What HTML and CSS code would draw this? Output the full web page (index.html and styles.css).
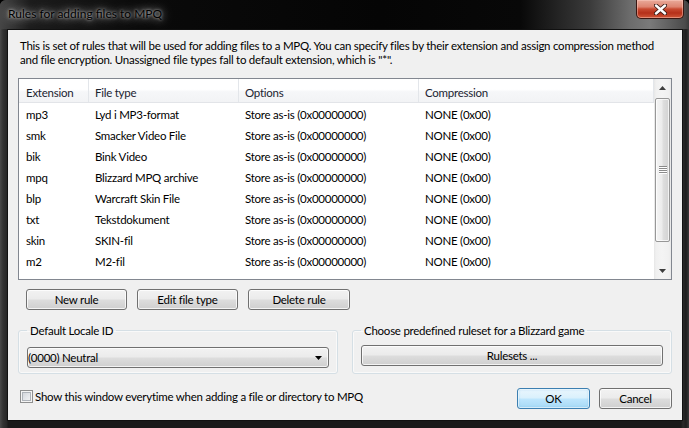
FILE: index.html
```html
<!DOCTYPE html>
<html>
<head>
<meta charset="utf-8">
<title>Rules for adding files to MPQ</title>
<link rel="stylesheet" href="styles.css">
</head>
<body>
<div class="window">
  <div class="titlebar">
    <span class="title">Rules for adding files to MPQ</span>
    <div class="close">
      <svg width="13" height="11" viewBox="0 0 13 11">
        <path d="M2 1.5 L11 9.5 M11 1.5 L2 9.5" stroke="#3b1a14" stroke-width="4.2" stroke-linecap="round"/>
        <path d="M2 1.5 L11 9.5 M11 1.5 L2 9.5" stroke="#fff" stroke-width="2.4" stroke-linecap="round"/>
      </svg>
    </div>
  </div>
  <div class="client">
    <p class="desc">This is set of rules that will be used for adding files to a MPQ. You can specify files by their extension and assign compression method<br>and file encryption. Unassigned file types fall to default extension, which is "*".</p>

    <div class="list">
      <div class="list-body">
        <div class="row header">
          <span class="c1">Extension</span><span class="c2">File type</span><span class="c3">Options</span><span class="c4">Compression</span>
        </div>
        <div class="row"><span class="c1">mp3</span><span class="c2">Lyd i MP3-format</span><span class="c3">Store as-is (0x00000000)</span><span class="c4">NONE (0x00)</span></div>
        <div class="row"><span class="c1">smk</span><span class="c2">Smacker Video File</span><span class="c3">Store as-is (0x00000000)</span><span class="c4">NONE (0x00)</span></div>
        <div class="row"><span class="c1">bik</span><span class="c2">Bink Video</span><span class="c3">Store as-is (0x00000000)</span><span class="c4">NONE (0x00)</span></div>
        <div class="row"><span class="c1">mpq</span><span class="c2">Blizzard MPQ archive</span><span class="c3">Store as-is (0x00000000)</span><span class="c4">NONE (0x00)</span></div>
        <div class="row"><span class="c1">blp</span><span class="c2">Warcraft Skin File</span><span class="c3">Store as-is (0x00000000)</span><span class="c4">NONE (0x00)</span></div>
        <div class="row"><span class="c1">txt</span><span class="c2">Tekstdokument</span><span class="c3">Store as-is (0x00000000)</span><span class="c4">NONE (0x00)</span></div>
        <div class="row"><span class="c1">skin</span><span class="c2">SKIN-fil</span><span class="c3">Store as-is (0x00000000)</span><span class="c4">NONE (0x00)</span></div>
        <div class="row"><span class="c1">m2</span><span class="c2">M2-fil</span><span class="c3">Store as-is (0x00000000)</span><span class="c4">NONE (0x00)</span></div>
      </div>
      <div class="vscroll">
        <div class="sb-btn">
          <svg width="7" height="4" viewBox="0 0 7 4"><path d="M0 4 L3.5 0 L7 4 Z" fill="#3d3d3d"/></svg>
        </div>
        <div class="sb-track">
          <div class="thumb">
            <svg width="8" height="8" viewBox="0 0 8 8">
              <path d="M0 0.5 H8 M0 2.5 H8 M0 4.5 H8 M0 6.5 H8" stroke="#8a8a8a" stroke-width="1"/>
              <path d="M0 1.5 H8 M0 3.5 H8 M0 5.5 H8 M0 7.5 H8" stroke="#ffffff" stroke-width="1"/>
            </svg>
          </div>
        </div>
        <div class="sb-btn">
          <svg width="7" height="4" viewBox="0 0 7 4"><path d="M0 0 L7 0 L3.5 4 Z" fill="#3d3d3d"/></svg>
        </div>
      </div>
    </div>

    <div class="buttons">
      <button class="btn">New rule</button>
      <button class="btn">Edit file type</button>
      <button class="btn btn-delete">Delete rule</button>
    </div>

    <div class="groups">
      <fieldset class="group">
        <legend>Default Locale ID</legend>
        <div class="combo">
          <span>(0000) Neutral</span>
          <svg width="7" height="4" viewBox="0 0 7 4"><path d="M0 0 L7 0 L3.5 4 Z" fill="#000"/></svg>
        </div>
      </fieldset>
      <fieldset class="group group-wide">
        <legend>Choose predefined ruleset for a Blizzard game</legend>
        <button class="btn btn-full">Rulesets ...</button>
      </fieldset>
    </div>

    <div class="footer">
      <label class="check"><span class="box"></span>Show this window everytime when adding a file or directory to MPQ</label>
      <div class="footer-buttons">
        <button class="btn btn-default">OK</button>
        <button class="btn btn-footer">Cancel</button>
      </div>
    </div>
  </div>
</div>
</body>
</html>
```

FILE: styles.css
```css
* { box-sizing: border-box; }
html, body { margin: 0; padding: 0; }
body {
  width: 689px;
  height: 428px;
  overflow: hidden;
  background: #000;
  font-family: Lato, "Liberation Sans", sans-serif;
  font-size: 11.5px;
  letter-spacing: -0.25px;
  color: #000;
}

.window {
  width: 689px;
  height: 428px;
  display: flex;
  flex-direction: column;
  background:
    linear-gradient(90deg, #4a4a4a 0px, #333 3px, #262626 7px, #1a1a1a 8px, #1a1a1a 681px, #2a2a2a 683px, #1e1e1e 686px, #3a3a3a 689px);
  border-radius: 6px 6px 0 0;
}

.titlebar {
  height: 29px;
  flex: none;
  display: flex;
  justify-content: space-between;
  align-items: flex-start;
  padding: 0 5px 0 8px;
  border-radius: 6px 6px 0 0;
  background: linear-gradient(90deg, #464646 0px, #1c1c1c 30px, #0a0a0a 140px, #050505 380px, #080808 520px, #3b3b3b 590px, #6c6c6c 630px, #7a7a7a 650px, #4b4b4b 685px, #3a3a3a 689px);
}

.title {
  margin-top: 6px;
  line-height: 16px;
  font-size: 12px;
  letter-spacing: 0;
  color: #000;
  text-shadow: 0 0 3px rgba(255,255,255,0.75), 0 0 8px rgba(255,255,255,0.6), 0 0 14px rgba(255,255,255,0.5);
}

.close {
  width: 48px;
  height: 19px;
  display: flex;
  align-items: center;
  justify-content: center;
  border: 1px solid #3a1712;
  border-top: none;
  border-radius: 0 0 5px 5px;
  background: linear-gradient(#e9aa9a 0%, #de8470 38%, #c84a31 50%, #b5301a 72%, #cf5637 100%);
  box-shadow: inset 0 0 0 1px rgba(255,210,200,0.45);
}

.client {
  flex: 1;
  margin: 0 6px 7px 7px;
  border: 1px solid #111;
  background: #f0f0f0;
  display: flex;
  flex-direction: column;
}

.desc {
  margin: 9px 0 0 12px;
  line-height: 14px;
  white-space: nowrap;
}

.list {
  margin: 11px 10px 0;
  height: 202px;
  flex: none;
  border: 1px solid #828790;
  background: #fff;
  display: flex;
}

.list-body {
  flex: 1;
  display: flex;
  flex-direction: column;
}

.row {
  display: flex;
  height: 21px;
  line-height: 21px;
  white-space: nowrap;
}

.row span { padding-left: 6px; padding-top: 1px; overflow: hidden; }
.row .c1 { width: 70px; padding-left: 7px; }
.row .c2 { width: 150px; }
.row .c3 { width: 180px; }
.row .c4 { flex: 1; }

.row.header {
  height: 24px;
  line-height: 21px;
  color: #1b2431;
  border-bottom: 1px solid #e2e4e8;
  background: linear-gradient(#ffffff 0%, #ffffff 45%, #f6f7f9 55%, #f2f3f5 100%);
}
.row.header span {
  padding-top: 3px;
  border-right: 1px solid #e3e6ea;
}

.vscroll {
  width: 17px;
  flex: none;
  display: flex;
  flex-direction: column;
  background: linear-gradient(90deg, #e6e6e6 0px, #f0f0f0 2px, #f4f4f4 8px, #f0f0f0 15px, #e8e8e8 17px);
}

.sb-btn {
  height: 17px;
  flex: none;
  display: flex;
  align-items: center;
  justify-content: center;
}

.sb-track {
  flex: 1;
  padding: 2px 1px 0 1px;
}

.thumb {
  height: 144px;
  border: 1px solid #979797;
  border-radius: 2px;
  background: linear-gradient(90deg, #f4f4f4 0%, #ececec 45%, #dedede 55%, #d2d2d2 100%);
  box-shadow: inset 0 0 0 1px rgba(255,255,255,0.7);
  display: flex;
  align-items: center;
  justify-content: center;
}

.btn {
  font: inherit;
  letter-spacing: inherit;
  color: #000;
  height: 21px;
  width: 101px;
  padding: 0;
  border: 1px solid #707070;
  border-radius: 3px;
  background: linear-gradient(#f2f2f2 0%, #ebebeb 48%, #dddddd 52%, #cfcfcf 100%);
  box-shadow: inset 0 0 0 1px rgba(255,255,255,0.75);
  line-height: 18px;
}

.buttons {
  margin: 9px 0 0 18px;
  display: flex;
  gap: 10px;
}
.btn-delete { width: 102px; }

.groups {
  margin: 12px 10px 0;
  display: flex;
  gap: 14px;
}

.group {
  margin: 0;
  width: 320px;
  padding: 0 8px 5px 8px;
  border: 1px solid #d5dfe5;
  border-radius: 3px;
  box-shadow: inset 0 0 0 1px rgba(255,255,255,0.6);
}
.group-wide { flex: 1; width: auto; }

.group legend {
  padding: 2px 3px 0;
  line-height: 14px;
}

.combo {
  margin-top: 9px;
  height: 21px;
  border: 1px solid #707070;
  border-radius: 3px;
  background: linear-gradient(#f2f2f2 0%, #ebebeb 48%, #dddddd 52%, #cfcfcf 100%);
  box-shadow: inset 0 0 0 1px rgba(255,255,255,0.75);
  display: flex;
  align-items: center;
  justify-content: space-between;
  padding: 0 6px 0 0;
  line-height: 18px;
}

.btn-full {
  width: 100%;
  margin-top: 7px;
}

.footer {
  margin-top: 14px;
  padding: 0 10px 0 12px;
  display: flex;
  align-items: center;
  justify-content: space-between;
}

.check {
  display: flex;
  align-items: center;
  gap: 2px;
  margin-bottom: 4px;
  line-height: 16px;
}

.box {
  width: 13px;
  height: 13px;
  border: 1px solid #8e8f8f;
  background: #f4f4f4;
  box-shadow: inset 0 0 0 1px #f4f4f4, inset 0 0 0 2px #aeb3b9;
  background-image: linear-gradient(135deg, #cbcfd5 0%, #e7e9ec 60%, #f6f6f6 100%);
}

.footer-buttons {
  display: flex;
  gap: 9px;
}

.btn-default,
.btn-footer { width: 73px; height: 21px; }

.btn-default {
  border-color: #3c7fb1;
  background: linear-gradient(#eaf6fd 0%, #d9f0fc 48%, #bee6fd 52%, #a7d9f5 100%);
  box-shadow: inset 0 0 0 1px rgba(255,255,255,0.6), inset 0 0 2px 1px rgba(100,180,230,0.35);
}
```
